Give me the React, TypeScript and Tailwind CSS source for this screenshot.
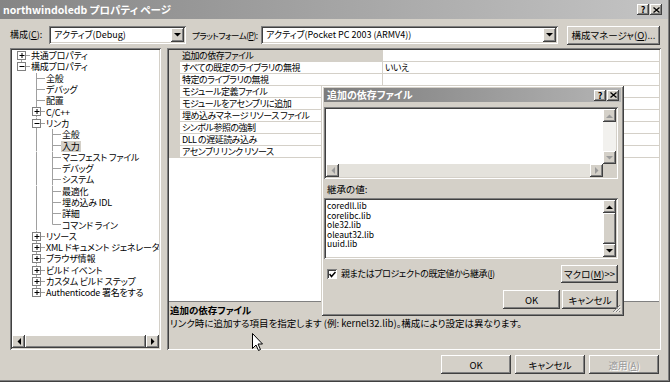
import React from "react";

const F = "font-['Noto_Sans_CJK_JP','Noto_Sans',sans-serif] [font-feature-settings:'palt']";
const RAISED = "shadow-[inset_-1px_-1px_#404040,inset_1px_1px_#ffffff,inset_-2px_-2px_#808080]";
const SUNKEN = "shadow-[inset_1px_1px_#808080,inset_-1px_-1px_#ffffff,inset_2px_2px_#404040,inset_-2px_-2px_#d4d0c8]";

type Dir = "up" | "down" | "left" | "right";

function Tri({ dir, color = "#000" }: { dir: Dir; color?: string }) {
  const pts = {
    up: "0,4 7,4 3.5,0.5",
    down: "0,0 7,0 3.5,3.5",
    left: "4,0 4,7 0.5,3.5",
    right: "0,0 0,7 3.5,3.5",
  }[dir];
  const v = dir === "up" || dir === "down";
  return (
    <svg width={v ? 7 : 4} height={v ? 4 : 7}>
      <polygon points={pts} fill={color} />
    </svg>
  );
}

function ArrowBtn({ dir, disabled }: { dir: Dir; disabled?: boolean }) {
  return (
    <div className={`w-[13px] h-[13px] shrink-0 bg-[#d4d0c8] ${RAISED} flex items-center justify-center`}>
      <Tri dir={dir} color={disabled ? "#9a9a9a" : "#000"} />
    </div>
  );
}

function Button({ children, className = "", disabled }: { children: React.ReactNode; className?: string; disabled?: boolean }) {
  return (
    <div
      className={`bg-[#d4d0c8] ${RAISED} flex items-center justify-center text-[9.5px] leading-[12px] whitespace-nowrap ${
        disabled ? "text-[#9a9a9a] [text-shadow:1px_1px_#ffffff]" : "text-black"
      } ${className}`}
    >
      {children}
    </div>
  );
}

function Combo({ text, className = "" }: { text: string; className?: string }) {
  return (
    <div className={`h-[18px] bg-white ${SUNKEN} flex items-center p-[2px] ${className}`}>
      <div className="flex-1 pl-[3px] text-[9px] leading-[12px] whitespace-nowrap">{text}</div>
      <div className={`w-[13px] h-[14px] bg-[#d4d0c8] ${RAISED} flex items-center justify-center`}>
        <Tri dir="down" />
      </div>
    </div>
  );
}

function TitleButtons() {
  return (
    <div className="flex gap-[1px]">
      <div className={`w-[12px] h-[11px] bg-[#d4d0c8] ${RAISED} flex items-center justify-center text-[9px] font-bold leading-none`}>
        ?
      </div>
      <div className={`w-[12px] h-[11px] bg-[#d4d0c8] ${RAISED} flex items-center justify-center`}>
        <svg width="7" height="6">
          <path d="M0.5 0.5 L6.5 5.5 M6.5 0.5 L0.5 5.5" stroke="#000" strokeWidth="1.3" />
        </svg>
      </div>
    </div>
  );
}

type TreeRow = { t: string; l: number; box?: "+" | "-"; sel?: boolean };

const treeRows: TreeRow[] = [
  { t: "共通プロパティ", l: 0, box: "+" },
  { t: "構成プロパティ", l: 0, box: "-" },
  { t: "全般", l: 1 },
  { t: "デバッグ", l: 1 },
  { t: "配置", l: 1 },
  { t: "C/C++", l: 1, box: "+" },
  { t: "リンカ", l: 1, box: "-" },
  { t: "全般", l: 2 },
  { t: "入力", l: 2, sel: true },
  { t: "マニフェスト ファイル", l: 2 },
  { t: "デバッグ", l: 2 },
  { t: "システム", l: 2 },
  { t: "最適化", l: 2 },
  { t: "埋め込み IDL", l: 2 },
  { t: "詳細", l: 2 },
  { t: "コマンド ライン", l: 2 },
  { t: "リソース", l: 1, box: "+" },
  { t: "XML ドキュメント ジェネレータ", l: 1, box: "+" },
  { t: "ブラウザ情報", l: 1, box: "+" },
  { t: "ビルド イベント", l: 1, box: "+" },
  { t: "カスタム ビルド ステップ", l: 1, box: "+" },
  { t: "Authenticode 署名をする", l: 1, box: "+" },
];

const CX = [9.5, 24.5, 40.5];
const RH = 11.3;

function hasNext(i: number) {
  const l = treeRows[i].l;
  for (let j = i + 1; j < treeRows.length; j++) {
    if (treeRows[j].l < l) return false;
    if (treeRows[j].l === l) return true;
  }
  return false;
}

function ancestorContinues(i: number, a: number) {
  for (let k = i - 1; k >= 0; k--) {
    if (treeRows[k].l === a) return hasNext(k);
  }
  return false;
}

function TreeLines({ i }: { i: number }) {
  const r = treeRows[i];
  const w = [18, 33, 49][r.l];
  const mid = Math.floor(RH / 2) + 0.5;
  const cx = CX[r.l];
  const c = "#a0a0a0";
  const els: React.ReactNode[] = [];
  for (let a = 0; a < r.l; a++) {
    if (ancestorContinues(i, a)) {
      els.push(<line key={"a" + a} x1={CX[a]} y1={0} x2={CX[a]} y2={RH} stroke={c} />);
    }
  }
  const top = i === 0 ? mid : 0;
  const bottom = hasNext(i) ? RH : mid;
  els.push(<line key="v" x1={cx} y1={top} x2={cx} y2={bottom} stroke={c} />);
  els.push(<line key="h" x1={cx} y1={mid} x2={w} y2={mid} stroke={c} />);
  if (r.box) {
    els.push(<rect key="b" x={cx - 4} y={mid - 4} width={8} height={8} fill="#fff" stroke="#808080" />);
    els.push(<line key="m" x1={cx - 2} y1={mid} x2={cx + 3} y2={mid} stroke="#000" />);
    if (r.box === "+") els.push(<line key="p" x1={cx + 0.5} y1={mid - 2.5} x2={cx + 0.5} y2={mid + 2.5} stroke="#000" />);
  }
  return (
    <svg width={w} height={RH} className="shrink-0">
      {els}
    </svg>
  );
}

function Tree() {
  return (
    <div className={`w-[151px] h-[302px] bg-white ${SUNKEN} p-[2px] flex flex-col`}>
      <div className="flex-1 overflow-hidden">
        {treeRows.map((r, i) => (
          <div key={i} className="flex items-center h-[11.3px]">
            <TreeLines i={i} />
            <span
              className={`text-[9px] tracking-[-0.2px] leading-[11px] whitespace-nowrap px-[1px] ${r.sel ? "bg-[#d4d0c8]" : ""}`}
            >
              {r.t}
            </span>
          </div>
        ))}
      </div>
      <div className="h-[13px] flex bg-[#ebe9e3]">
        <ArrowBtn dir="left" />
        <div className={`flex-1 bg-[#d4d0c8] ${RAISED}`} />
        <ArrowBtn dir="right" />
      </div>
    </div>
  );
}

const props: [string, string][] = [
  ["追加の依存ファイル", ""],
  ["すべての既定のライブラリの無視", "いいえ"],
  ["特定のライブラリの無視", ""],
  ["モジュール定義ファイル", ""],
  ["モジュールをアセンブリに追加", ""],
  ["埋め込みマネージ リソース ファイル", ""],
  ["シンボル参照の強制", ""],
  ["DLL の遅延読み込み", ""],
  ["アセンブリ リンク リソース", ""],
];

function Grid() {
  return (
    <div className={`w-[494px] h-[302px] ${SUNKEN} p-[2px] flex flex-col bg-[#d4d0c8]`}>
      <div className="flex-1 bg-white">
        {props.map(([n, v], i) => (
          <div key={i} className="flex h-[12px] text-[9px] leading-[11px]">
            <div className="w-[11px] bg-[#d4d0c8] shrink-0" />
            <div
              className={`w-[203px] shrink-0 border-r border-b border-[#d4d0c8] pl-[2px] tracking-[-0.5px] whitespace-nowrap overflow-hidden ${
                i === 0 ? "bg-[#d4d0c8]" : ""
              }`}
            >
              {n}
            </div>
            <div className="flex-1 border-b border-[#d4d0c8] pl-[2px] tracking-[-0.5px]">{v}</div>
          </div>
        ))}
      </div>
      <div className="h-[47px] border-t border-[#808080] pl-[1px] pt-[2px]">
        <div className="text-[9.5px] font-bold leading-[12px]">追加の依存ファイル</div>
        <div className="text-[9.5px] leading-[14px] whitespace-nowrap">
          リンク時に追加する項目を指定します (例: kernel32.lib)。構成により設定は異なります。
        </div>
      </div>
    </div>
  );
}

function Popup() {
  const libs = ["coredll.lib", "corelibc.lib", "ole32.lib", "oleaut32.lib", "uuid.lib"];
  return (
    <div
      className={`absolute left-[321px] top-[85px] w-[303px] h-[231px] bg-[#d4d0c8] shadow-[inset_1px_1px_#d4d0c8,inset_-1px_-1px_#404040,inset_2px_2px_#ffffff,inset_-2px_-2px_#808080] p-[3px] flex flex-col`}
    >
      <div className="h-[14px] bg-[linear-gradient(to_right,#7c7c7c,#b4b4b4)] flex items-center justify-between pl-[3px] pr-[2px]">
        <span className="text-white font-bold text-[10px] leading-[12px]">追加の依存ファイル</span>
        <TitleButtons />
      </div>
      <div className="pr-[3px] flex flex-col">
        <div className={`mt-[5px] h-[72px] bg-white ${SUNKEN} p-[2px] flex flex-col`}>
          <div className="flex flex-1">
            <div className="flex-1" />
            <div className="w-[13px] flex flex-col bg-[#f2f1ee]">
              <ArrowBtn dir="up" disabled />
              <div className="flex-1" />
              <ArrowBtn dir="down" disabled />
            </div>
          </div>
          <div className="h-[13px] flex">
            <div className="flex-1 flex bg-[#e4e2dc]">
              <ArrowBtn dir="left" disabled />
              <div className="flex-1" />
              <ArrowBtn dir="right" disabled />
            </div>
            <div className="w-[13px] bg-[#d4d0c8]" />
          </div>
        </div>
        <div className="mt-[4px] pl-[3px] text-[9.5px] leading-[12px]">継承の値:</div>
        <div className={`mt-[3px] h-[61px] bg-white ${SUNKEN} p-[2px] flex`}>
          <div className="flex-1 pl-[1px] pt-[1px]">
            {libs.map((l) => (
              <div key={l} className="text-[8.5px] leading-[9.6px] h-[9.6px]">
                {l}
              </div>
            ))}
          </div>
          <div className="w-[13px] flex flex-col bg-[#ebe9e3]">
            <ArrowBtn dir="up" />
            <div className={`flex-1 bg-[#d4d0c8] ${RAISED}`} />
            <ArrowBtn dir="down" />
          </div>
        </div>
        <div className="mt-[6px] flex items-center h-[18px]">
          <div className="ml-[3px] w-[10px] h-[10px] bg-white shadow-[inset_1px_1px_#808080,inset_-1px_-1px_#ffffff,inset_2px_2px_#404040] flex items-center justify-center">
            <svg width="7" height="7">
              <path d="M0.5 3 L2.5 5.5 L6.5 1" stroke="#000" strokeWidth="1.5" fill="none" />
            </svg>
          </div>
          <span className="ml-[4px] text-[9px] tracking-[-0.4px] leading-[12px] whitespace-nowrap">
            親またはプロジェクトの既定値から継承(<u>I</u>)
          </span>
          <div className="flex-1" />
          <Button className="w-[57px] h-[18px]">
            マクロ(<u>M</u>)&gt;&gt;
          </Button>
        </div>
        <div className="mt-[7px] flex justify-end gap-[2px]">
          <Button className="w-[57px] h-[19px]">OK</Button>
          <Button className="w-[56px] h-[19px]">キャンセル</Button>
        </div>
      </div>
      <svg className="absolute right-[3px] bottom-[3px]" width="9" height="9">
        <path d="M8 1 L1 8 M8 4 L4 8 M8 7 L7 8" stroke="#808080" />
        <path d="M8.5 2 L2 8.5 M8.5 5 L5 8.5" stroke="#ffffff" />
      </svg>
    </div>
  );
}

export default function App() {
  return (
    <div className={`relative w-[670px] h-[382px] overflow-hidden bg-[#d4d0c8] text-black ${F}`}>
      <div className="h-full flex flex-col shadow-[inset_-1px_-1px_#404040,inset_-2px_-2px_#808080]">
        <div className="h-[19px] bg-[linear-gradient(to_right,#858585,#c4c4c4)] flex items-center justify-between pl-[3px] pr-[6px] mr-[2px]">
          <span className="text-white font-bold text-[10.5px] leading-[12px]">northwindoledb プロパティ ページ</span>
          <TitleButtons />
        </div>
        <div className="mt-[7px] h-[18px] flex items-center pl-[10px]">
          <span className="w-[39px] text-[9px] leading-[12px] whitespace-nowrap">
            構成(<u>C</u>):
          </span>
          <Combo text="アクティブ(Debug)" className="w-[137px]" />
          <span className="ml-[6px] w-[69px] text-[8.5px] tracking-[-0.5px] leading-[12px] whitespace-nowrap">
            プラットフォーム(<u>P</u>):
          </span>
          <Combo text="アクティブ(Pocket PC 2003 (ARMV4))" className="w-[297px]" />
          <Button className="ml-[9px] w-[93px] h-[19px]">
            構成マネージャ(<u>O</u>)...
          </Button>
        </div>
        <div className="mt-[4px] flex pl-[10px] gap-[6px]">
          <Tree />
          <Grid />
        </div>
        <div className="mt-[5px] flex pl-[441px] gap-[4px]">
          <Button className="w-[70px] h-[19px]">OK</Button>
          <Button className="w-[70px] h-[19px]">キャンセル</Button>
          <Button className="w-[70px] h-[19px]" disabled>
            適用(<u>A</u>)
          </Button>
        </div>
      </div>
      <Popup />
      <svg className="absolute left-[252px] top-[333px]" width="12" height="19">
        <path
          d="M0.5 0.5 L0.5 15.5 L4 12 L6.5 17.5 L8.5 16.5 L6 11 L10.5 11 Z"
          fill="#ffffff"
          stroke="#000000"
          strokeLinejoin="miter"
        />
      </svg>
    </div>
  );
}
